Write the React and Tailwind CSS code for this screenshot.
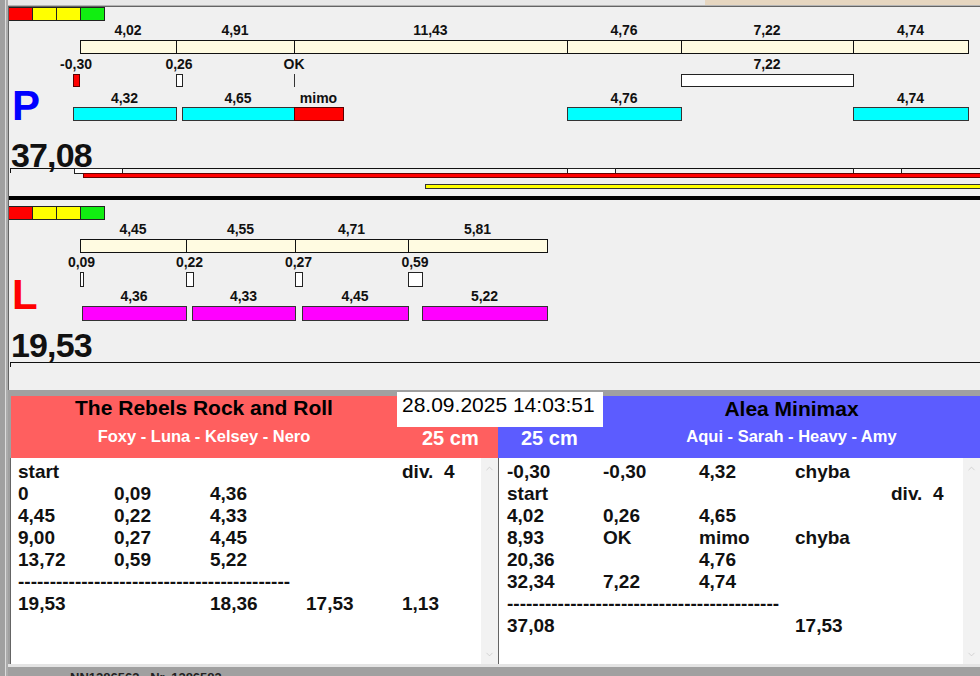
import React from "react";
import { ChevronUp, ChevronDown } from "lucide-react";

// chart x origin (screen x of the lane's padding box)
const OX = 9;

const fills = {
  red: "bg-[#ff0000] border-[#5a0000]",
  white: "bg-white border-[#222]",
  cyan: "bg-[#00ffff] border-[#333]",
  magenta: "bg-[#ff00ff] border-[#333]",
};

const laneP = {
  lights: 0,
  segTop: 33,
  segH: 14,
  segLabel: 16,
  segs: [
    [80, 176, "4,02"],
    [176, 294, "4,91"],
    [294, 567, "11,43"],
    [567, 681, "4,76"],
    [681, 853, "7,22"],
    [853, 968, "4,74"],
  ],
  midTop: 67,
  midH: 13,
  midLabel: 50,
  mids: [
    [73, 79, "red", "-0,30"],
    [176, 182, "white", "0,26"],
    [294, 294, "tick", "OK"],
    [681, 853, "white", "7,22"],
  ],
  barTop: 100,
  barH: 14,
  barLabel: 84,
  bars: [
    [73, 176, "cyan", "4,32"],
    [182, 294, "cyan", "4,65"],
    [294, 343, "red", "mimo"],
    [567, 681, "cyan", "4,76"],
    [853, 968, "cyan", "4,74"],
  ],
  letter: "P",
  letterTop: 77.5,
  letterCls: "text-[#0000ff]",
  total: "37,08",
  totalTop: 130.5,
  lineTop: 161,
};

const laneL = {
  lights: 6,
  segTop: 39,
  segH: 14,
  segLabel: 22,
  segs: [
    [80, 186, "4,45"],
    [186, 295, "4,55"],
    [295, 408, "4,71"],
    [408, 547, "5,81"],
  ],
  midTop: 72,
  midH: 15,
  midLabel: 55,
  mids: [
    [80, 83, "white", "0,09"],
    [186, 193, "white", "0,22"],
    [295, 302, "white", "0,27"],
    [408, 422, "white", "0,59"],
  ],
  barTop: 106,
  barH: 15,
  barLabel: 89,
  bars: [
    [82, 186, "magenta", "4,36"],
    [192, 295, "magenta", "4,33"],
    [302, 408, "magenta", "4,45"],
    [422, 547, "magenta", "5,22"],
  ],
  letter: "L",
  letterTop: 73.5,
  letterCls: "text-[#ff0000]",
  total: "19,53",
  totalTop: 127.5,
  lineTop: 162,
};

const Label = ({ cx, top, children }) => (
  <div
    className="absolute -translate-x-1/2 whitespace-nowrap text-[14px] font-bold leading-[14px] text-[#111]"
    style={{ left: cx - OX, top }}
  >
    {children}
  </div>
);

const Lights = ({ top }) => (
  <div className="absolute left-[-1px] flex" style={{ top }}>
    <div className="w-[25px] h-[14px] bg-[#ff0000] border border-[#222]" />
    <div className="w-[24px] h-[14px] bg-[#ffff00] border border-l-0 border-[#222]" />
    <div className="w-[24px] h-[14px] bg-[#ffff00] border border-l-0 border-[#222]" />
    <div className="w-[24px] h-[14px] bg-[#11ee11] border border-l-0 border-[#222]" />
  </div>
);

const Lane = ({ d, className, children }) => (
  <div className={`relative overflow-hidden ${className}`}>
    <Lights top={d.lights} />

    {d.segs.map(([a, b, t]) => (
      <React.Fragment key={"s" + a}>
        <Label cx={(a + b) / 2} top={d.segLabel}>
          {t}
        </Label>
        <div
          className="absolute bg-[#fffbe1] border border-[#111]"
          style={{ left: a - OX, width: b - a + 1, top: d.segTop, height: d.segH }}
        />
      </React.Fragment>
    ))}

    {d.mids.map(([a, b, f, t]) => (
      <React.Fragment key={"m" + a}>
        <Label cx={(a + b) / 2} top={d.midLabel}>
          {t}
        </Label>
        {f === "tick" ? (
          <div
            className="absolute w-px bg-[#333]"
            style={{ left: a - OX, top: d.midTop, height: d.midH }}
          />
        ) : (
          <div
            className={`absolute border ${fills[f]}`}
            style={{ left: a - OX, width: b - a + 1, top: d.midTop, height: d.midH }}
          />
        )}
      </React.Fragment>
    ))}

    {d.bars.map(([a, b, f, t]) => (
      <React.Fragment key={"b" + a}>
        <Label cx={(a + b) / 2} top={d.barLabel}>
          {t}
        </Label>
        <div
          className={`absolute border ${fills[f]}`}
          style={{ left: a - OX, width: b - a + 1, top: d.barTop, height: d.barH }}
        />
      </React.Fragment>
    ))}

    <div
      className={`absolute left-[3px] text-[42px] font-bold leading-none ${d.letterCls}`}
      style={{ top: d.letterTop }}
    >
      {d.letter}
    </div>
    <div
      className="absolute left-[2px] text-[34px] font-bold leading-none tracking-tight text-[#111]"
      style={{ top: d.totalTop }}
    >
      {d.total}
    </div>

    <div className="absolute left-[1px] right-0 h-px bg-[#111]" style={{ top: d.lineTop }} />
    <div className="absolute left-[1px] w-px h-[5px] bg-[#111]" style={{ top: d.lineTop }} />
    {children}
  </div>
);

const leftRows = [
  ["start", "", "", "", "div.  4"],
  ["0", "0,09", "4,36"],
  ["4,45", "0,22", "4,33"],
  ["9,00", "0,27", "4,45"],
  ["13,72", "0,59", "5,22"],
  "-------------------------------------------",
  ["19,53", "", "18,36", "17,53", "1,13"],
];

const rightRows = [
  ["-0,30", "-0,30", "4,32", "chyba"],
  ["start", "", "", "", "div.  4"],
  ["4,02", "0,26", "4,65"],
  ["8,93", "OK", "mimo", "chyba"],
  ["20,36", "", "4,76"],
  ["32,34", "7,22", "4,74"],
  "-------------------------------------------",
  ["37,08", "", "", "17,53"],
];

const ListBox = ({ rows, className, padCls }) => (
  <div className={`flex min-w-0 h-full bg-white border-l border-[#646464] ${className}`}>
    <div
      className={`flex-1 min-w-0 overflow-hidden pt-[3px] text-[19px] font-bold leading-[22px] text-[#111] ${padCls}`}
    >
      {rows.map((r, i) =>
        typeof r === "string" ? (
          <div key={i} className="whitespace-pre">
            {r}
          </div>
        ) : (
          <div key={i} className="grid grid-cols-[96px_96px_96px_96px_96px] h-[22px]">
            {r.map((c, j) => (
              <div key={j} className="whitespace-pre">
                {c}
              </div>
            ))}
          </div>
        )
      )}
    </div>
    <div className="w-[17px] shrink-0 bg-[#f2f2f2] flex flex-col items-center justify-between pt-[5px] pb-[4px]">
      <ChevronUp size={11} strokeWidth={1.5} color="#c4c4c4" />
      <ChevronDown size={11} strokeWidth={1.5} color="#c4c4c4" />
    </div>
  </div>
);

export default function App() {
  return (
    <div className="w-[980px] h-[676px] overflow-hidden flex bg-[#f0f0f0] font-['Liberation_Sans',Arial,sans-serif]">
      {/* window frame, left side */}
      <div className="w-[8px] shrink-0 h-full flex">
        <div className="w-[5px] bg-[#a0a0a0]" />
        <div className="w-[1px] bg-[#dcdcdc]" />
        <div className="w-[2px] bg-[#acacac]" />
      </div>

      <div className="flex-1 min-w-0 flex flex-col">
        {/* top edge */}
        <div className="h-[6px] flex">
          <div className="flex-1 bg-[#e8e8e8] border-b border-[#b4b4b4]" />
          <div className="w-[275px] bg-[#e6d6c0] border-b border-[#b4b4b4]" />
        </div>

        {/* chart panel */}
        <div className="h-[384px] flex flex-col border-l border-t border-[#646464] bg-[#f0f0f0]">
          <Lane d={laneP} className="h-[189px]">
            {[
              [74, 122],
              [567, 615],
              [853, 901],
            ].map(([a, b]) => (
              <div
                key={a}
                className="absolute h-[6px] bg-white border border-[#222]"
                style={{ left: a - OX, width: b - a + 1, top: 161 }}
              />
            ))}
            <div className="absolute left-[74px] right-[-10px] top-[166px] h-[5px] bg-[#ff0000] border border-[#6a0000]" />
            <div className="absolute left-[416px] right-[-10px] top-[177px] h-[5px] bg-[#ffff00] border border-[#333]" />
          </Lane>
          <div className="h-[4px] bg-black" />
          <Lane d={laneL} className="h-[190px]" />
        </div>

        {/* teams */}
        <div className="relative flex-1 flex flex-col bg-[#a0a0a0] pt-[6px]">
          <div className="absolute left-[389px] top-[2px] w-[206px] h-[35px] bg-white pl-[5px] pt-[2px] text-[21px] leading-none text-black">
            28.09.2025 14:03:51
          </div>

          <div className="h-[62px] flex pl-[3px]">
            <div className="w-[487px] shrink-0 bg-[#ff5f5f] flex flex-col">
              <div className="h-[31px] w-[386px] pt-[1px] text-center text-[21px] font-bold leading-none text-black">
                The Rebels Rock and Roll
              </div>
              <div className="h-[31px] flex items-start pt-[1px]">
                <div className="w-[386px] text-center text-[16.5px] font-bold leading-none text-white">
                  Foxy - Luna - Kelsey - Nero
                </div>
                <div className="ml-[25px] text-[20px] font-bold leading-none text-white">25 cm</div>
              </div>
            </div>
            <div className="flex-1 min-w-0 bg-[#5c5cff] flex flex-col">
              <div className="h-[31px] pl-[105px] pt-[2px] text-center text-[21px] font-bold leading-none text-black">
                Alea Minimax
              </div>
              <div className="h-[31px] flex items-start pt-[1px]">
                <div className="w-[105px] shrink-0 pl-[23px] text-[20px] font-bold leading-none text-white">
                  25 cm
                </div>
                <div className="flex-1 text-center text-[16.5px] font-bold leading-none text-white">
                  Aqui - Sarah - Heavy - Amy
                </div>
              </div>
            </div>
          </div>

          <div className="h-[206px] flex pl-[2px]">
            <ListBox rows={leftRows} className="w-[488px] shrink-0" padCls="pl-[7px]" />
            <ListBox rows={rightRows} className="flex-1" padCls="pl-[8px]" />
          </div>

          <div className="h-[12px] overflow-hidden border-t-[3px] border-[#e4e4e4] bg-[#a0a0a0] pl-[62px] pt-[4px] text-[13px] font-bold leading-none text-[#222] whitespace-pre">
            NN1286563   Nr. 1286583
          </div>
        </div>
      </div>
    </div>
  );
}
